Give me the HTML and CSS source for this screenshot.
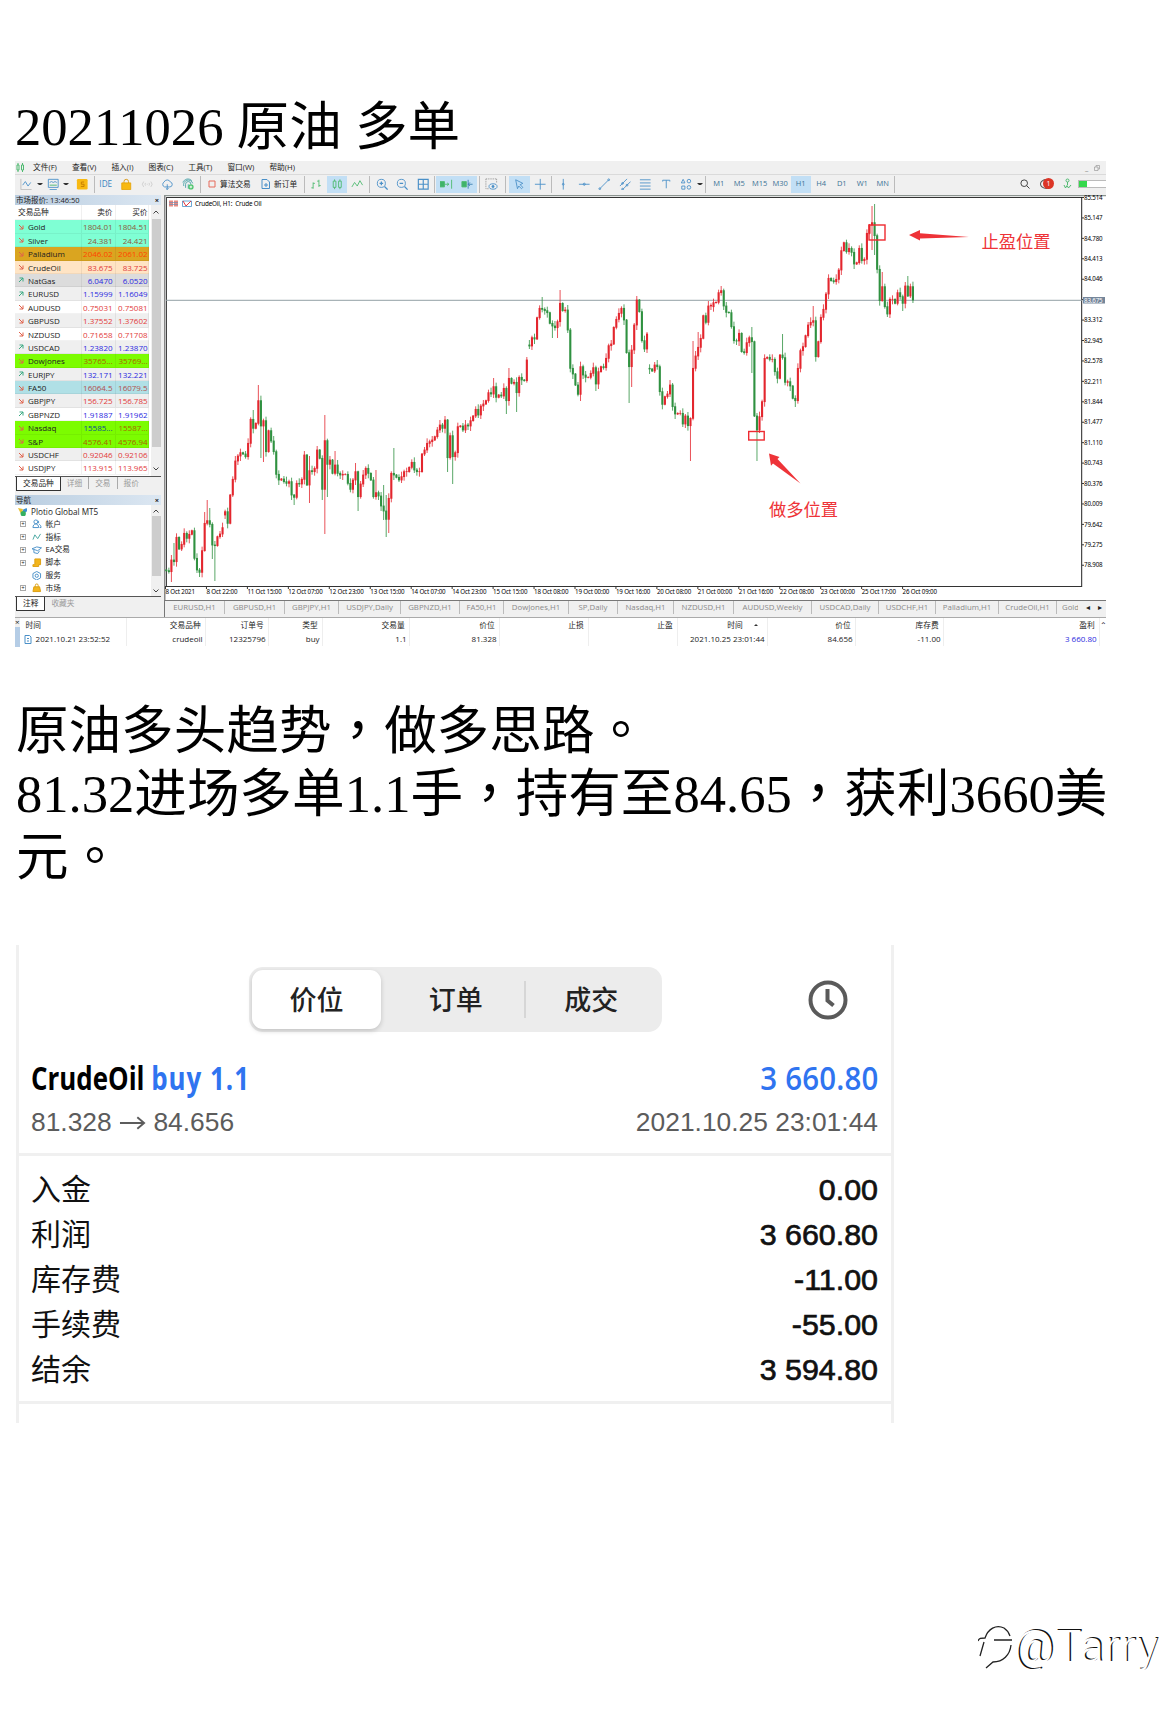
FILE: index.html
```
<!DOCTYPE html>
<html lang="zh-CN">
	<head>
		<meta charset="utf-8">
		<title>20211026 原油 多单</title>
		<link rel="stylesheet" href="styles.css">
	</head>
	<body>
		<svg class="defs">
			<symbol id="down" viewBox="0 0 6 6"><path d="M1 1l4 4M5 1.5V5H1.5" fill="none" stroke="#e0604a"/></symbol>
			<symbol id="up" viewBox="0 0 6 6"><path d="M1 5l4-4M1.5 1H5v3.5" fill="none" stroke="#3aa982"/></symbol>
		</svg>
		<h1>20211026 原油 多单</h1>

		<div class="terminal">
			<div class="menu">
				<svg width="9" height="9" viewBox="0 0 9 9" class="green"><path d="M1 2h2v5H1zM5.500 2h2v5h-2zM2 0v2M2 7v2M6.500 0v2M6.500 7v2"/></svg>
				<span>文件(F)</span><span>查看(V)</span><span>插入(I)</span><span>图表(C)</span><span>工具(T)</span><span>窗口(W)</span><span>帮助(H)</span>
				<div class="winbtn"><i>_</i><svg width="6" height="6" viewBox="0 0 6 6"><path d="M.5 2h3.500v3.500H.5zM2 2V.5h3.500V4H4" fill="none" stroke="#999" stroke-width=".7"/></svg></div>
			</div>
			<div class="toolbar">
				<div class="tool"><svg viewBox="0 0 14 14"><path d="M1 1v12h12" stroke="#bbb"/><path d="M3 8l3-4 3 5 3-4"/></svg></div>
				<div class="caret"></div>
				<div class="tool"><svg viewBox="0 0 14 14"><path d="M1.500 1.500h11v9h-11zM3 13h8M3 5l2-1 2 1 2-1 2 1" /><path d="M3 8h8" stroke="#3fb36b"/></svg></div>
				<div class="caret"></div>
				<div class="tool pad"><svg viewBox="0 0 14 14"><rect x="1" y="1" width="12" height="12" rx="1.500" fill="#f8b912" stroke="none"/><path d="M9 4.500H6v2.500h3v2.500H5.500" stroke="#c47a00"/></svg></div>
				<div class="sep w3"></div>
				<div class="tool ide">IDE</div>
				<div class="tool"><svg viewBox="0 0 14 14"><path d="M4.500 6V4a2.500 2.500 0 015 0v2" stroke="#d89510"/><path d="M2 5.500h10V13H2z" fill="#f8b912" stroke="#e5a50c"/></svg></div>
				<div class="tool"><svg viewBox="0 0 14 14"><path d="M3 4Q0 7 3 10M5 5.500Q4 7 5 8.500M9 5.500q1 1.500 0 3M11 4q3 3 0 6M6.500 7h1" stroke="#ccc"/></svg></div>
				<div class="tool"><svg viewBox="0 0 14 14"><path d="M4 10a3 3 0 01-.5-5.500 3.800 3.800 0 017 0A2.800 2.800 0 0110 10zM7 7v6M5.500 11.500L7 13l1.500-1.500" /></svg></div>
				<div class="tool"><svg viewBox="0 0 14 14"><path d="M2 9a5 5 0 0110-3M4 11V7a3 3 0 016 0M7 7v5M1 5a6 6 0 0110-2" stroke="#4aa3a8"/><circle cx="10" cy="10" r="3" fill="#4cc46c" stroke="none"/><path d="M8.500 10h3M10 8.500v3" stroke="#fff"/></svg></div>
				<div class="sep w4"></div>
				<div class="btn algo"><svg width="8" height="8" viewBox="0 0 8 8"><path d="M1 1h6v6H1z" fill="none" stroke="#e66a5a"/></svg>算法交易</div>
				<div class="btn order"><svg width="10" height="10" viewBox="0 0 10 10"><path d="M1 .5h5l2.500 2.500v6.500H1zM3 6h4M5 4v4" fill="none" stroke="#4a90c8"/></svg>新订单</div>
				<div class="sep w3"></div>
				<div class="tool green"><svg viewBox="0 0 14 14"><path d="M3.500 5v7M1.500 11h2M3.500 6h2M10 2v8M8 3.500h2M10 8.500h2"/></svg></div>
				<div class="tool green on"><svg viewBox="0 0 14 14"><path d="M2.500 3.500h3v7h-3zM8.500 3.500h3v7h-3zM4 1.500v2M4 10.500v2M10 1.500v2M10 10.500v2"/></svg></div>
				<div class="tool green"><svg viewBox="0 0 14 14"><path d="M1 10l3-5 3 4 3-6 3 5"/></svg></div>
				<div class="sep w4"></div>
				<div class="tool"><svg viewBox="0 0 14 14"><circle cx="6" cy="6" r="4.500"/><path d="M9.500 9.500L13 13M4 6h4M6 4v4" stroke-width="1.400"/></svg></div>
				<div class="tool"><svg viewBox="0 0 14 14"><circle cx="6" cy="6" r="4.500"/><path d="M9.500 9.500L13 13M4 6h4" stroke-width="1.400"/></svg></div>
				<div class="tool"><svg viewBox="0 0 14 14"><path d="M1.500 1.500h11v11h-11zM7 1.500v11M1.500 7h11" stroke-width="1.300"/></svg></div>
				<div class="sep w3"></div>
				<div class="tool green on"><svg viewBox="0 0 14 14"><path d="M0 4h5v6H0z" fill="#3fb36b"/><path d="M5 7h5M8 5.500L10 7 8 8.500M13 2v10"/></svg></div>
				<div class="tool green on"><svg viewBox="0 0 14 14"><path d="M1 4h5v6H1z" fill="#3fb36b"/><path d="M8 2v10M8 7h5M10 5L8 7l2 2" stroke="#3d7fb0"/></svg></div>
				<div class="sep w4"></div>
				<div class="tool"><svg viewBox="0 0 14 14"><path d="M1 1h12M1 1v11h4M13 1v4" stroke="#999" stroke-dasharray="1.500 1"/><ellipse cx="9" cy="9.500" rx="4.500" ry="3"/><circle cx="9" cy="9.500" r="1.200" fill="#4a90c8"/></svg></div>
				<div class="sep w7"></div>
				<div class="tool on"><svg viewBox="0 0 14 14"><path d="M3 2l8 4-3 1.500 3 3-1.500 1.500-3-3L5 12z"/></svg></div>
				<div class="tool"><svg viewBox="0 0 14 14"><path d="M7 1v12M1 7h12"/></svg></div>
				<div class="sep w3"></div>
				<div class="tool"><svg viewBox="0 0 14 14"><path d="M7 1v12"/><circle cx="7" cy="7" r="1"/></svg></div>
				<div class="tool"><svg viewBox="0 0 14 14"><path d="M1 7h12"/><circle cx="7" cy="7" r="1.200"/></svg></div>
				<div class="tool"><svg viewBox="0 0 14 14"><path d="M2 12L12 2"/><circle cx="2" cy="12" r="1"/><circle cx="12" cy="2" r="1"/></svg></div>
				<div class="tool"><svg viewBox="0 0 14 14"><path d="M1 9l8-8M4 13l9-9"/><circle cx="4" cy="6" r="1"/><circle cx="9" cy="8" r="1"/><circle cx="4" cy="12.500" r="1"/></svg></div>
				<div class="tool"><svg viewBox="0 0 14 14"><path d="M1 2h12M1 5.500h12M1 9h12M1 12.500h12"/></svg></div>
				<div class="tool"><svg viewBox="0 0 14 14"><path d="M3 4V2.500h8V4M7 2.500v9"/></svg></div>
				<div class="tool"><svg viewBox="0 0 14 14"><path d="M1.500 5.500l2-4 2 4zM2 9h3.500v3.500H2z"/><circle cx="10" cy="3.500" r="2"/><circle cx="10" cy="10.500" r="2"/></svg></div>
				<div class="caret"></div>
				<div class="sep w6"></div>
				<div class="tool tf">M1</div><div class="tool tf">M5</div><div class="tool tf">M15</div><div class="tool tf">M30</div><div class="tool tf on">H1</div><div class="tool tf">H4</div><div class="tool tf">D1</div><div class="tool tf">W1</div><div class="tool tf">MN</div>
				<div class="sep w3"></div>
				<div class="status">
					<svg width="10" height="10" viewBox="0 0 10 10"><circle cx="4.200" cy="4.200" r="3.300" fill="none" stroke="#444"/><path d="M6.500 6.500L9.500 9.500" stroke="#444"/></svg>
					<div class="chat"><span>1</span></div>
					<svg width="9" height="12" viewBox="0 0 9 12" class="green"><circle cx="4.500" cy="2.500" r="1.500"/><path d="M4.500 4v3M1 7l1.500 3L4 7.500 5.500 10 8 7"/></svg>
					<div class="battery"></div>
				</div>
			</div>

			<div class="work">
				<div class="side">
					<div class="caption">市场报价: 13:46:50<b>×</b></div>
					<div class="quotes">
						<div class="list">
							<div class="q head"><span>交易品种</span><span>卖价</span><span>买价</span></div>
							<div class="q aqua dn"><span><svg><use href="#down"/></svg>Gold</span><span>1804.01</span><span>1804.51</span></div>
							<div class="q aqua dn"><span><svg><use href="#down"/></svg>Silver</span><span>24.381</span><span>24.421</span></div>
							<div class="q gold dn"><span><svg><use href="#down"/></svg>Palladium</span><span>2046.02</span><span>2061.02</span></div>
							<div class="q bisque dn"><span><svg><use href="#down"/></svg>CrudeOil</span><span>83.675</span><span>83.725</span></div>
							<div class="q gray upp"><span><svg><use href="#up"/></svg>NatGas</span><span>6.0470</span><span>6.0520</span></div>
							<div class="q alt upp"><span><svg><use href="#up"/></svg>EURUSD</span><span>1.15999</span><span>1.16049</span></div>
							<div class="q dn"><span><svg><use href="#down"/></svg>AUDUSD</span><span>0.75031</span><span>0.75081</span></div>
							<div class="q alt dn"><span><svg><use href="#down"/></svg>GBPUSD</span><span>1.37552</span><span>1.37602</span></div>
							<div class="q dn"><span><svg><use href="#down"/></svg>NZDUSD</span><span>0.71658</span><span>0.71708</span></div>
							<div class="q alt upp"><span><svg><use href="#up"/></svg>USDCAD</span><span>1.23820</span><span>1.23870</span></div>
							<div class="q lime"><span><svg><use href="#down"/></svg>DowJones</span><span>35765...</span><span>35769...</span></div>
							<div class="q alt upp"><span><svg><use href="#up"/></svg>EURJPY</span><span>132.171</span><span>132.221</span></div>
							<div class="q powder dn"><span><svg><use href="#down"/></svg>FA50</span><span>16064.5</span><span>16079.5</span></div>
							<div class="q alt dn"><span><svg><use href="#down"/></svg>GBPJPY</span><span>156.725</span><span>156.785</span></div>
							<div class="q upp"><span><svg><use href="#up"/></svg>GBPNZD</span><span>1.91887</span><span>1.91962</span></div>
							<div class="q lime"><span><svg><use href="#down"/></svg>Nasdaq</span><span class="navy">15585...</span><span>15587...</span></div>
							<div class="q lime"><span><svg><use href="#down"/></svg>S&amp;P</span><span>4576.41</span><span>4576.94</span></div>
							<div class="q alt dn"><span><svg><use href="#down"/></svg>USDCHF</span><span>0.92046</span><span>0.92106</span></div>
							<div class="q dn"><span><svg><use href="#down"/></svg>USDJPY</span><span>113.915</span><span>113.965</span></div>
						</div>
						<div class="scroll"><svg viewBox="0 0 6 4"><path d="M.5 3.500L3 1l2.500 2.500"/></svg><div class="thumb"></div><svg viewBox="0 0 6 4"><path d="M.5.5L3 3 5.500.5"/></svg></div>
					</div>
					<div class="sidetabs"><b>交易品种</b><span>详细</span><span>交易</span><span>报价</span></div>
					<div class="caption nav">导航<b>×</b></div>
					<div class="quotes tree">
						<div class="list">
							<div class="node root"><svg viewBox="0 0 10 10"><path d="M0 1l5 1v4L3 7z" fill="#e8c030"/><path d="M5 3l4-2 1 3-4 3z" fill="#3a90d0"/><circle cx="5.500" cy="7" r="2.800" fill="#35b060"/></svg>Plotio Global MT5</div>
							<div class="node"><i>+</i><svg viewBox="0 0 10 10"><circle cx="4" cy="3" r="2"/><path d="M1 9c0-5 6-5 6 0zM6 1.500a2 2 0 010 3.500M8 9h1.500c0-2-1-3-2-3.500"/></svg>帐户</div>
							<div class="node"><i>+</i><svg viewBox="0 0 10 10"><path d="M1 8l2-5 3 4 3-5" stroke="#45a5a0"/></svg>指标</div>
							<div class="node"><i>+</i><svg viewBox="0 0 10 10"><path d="M0 4l5-2 5 1-4 3zM2 5v3l4 1 2-3"/></svg>EA交易</div>
							<div class="node"><i>+</i><svg viewBox="0 0 10 10"><path d="M3 1h6v6H7v2H1V7h2z" fill="#f2b51d" stroke="#dc9e10"/></svg>脚本</div>
							<div class="node"><i class="no"></i><svg viewBox="0 0 10 10"><path d="M5 .5l4 2.200v4.500L5 9.500 1 7.200V2.700z"/><circle cx="5" cy="5" r="1.700"/></svg>服务</div>
							<div class="node"><i>+</i><svg viewBox="0 0 10 10"><path d="M3.500 4V2.500a1.500 1.500 0 013 0V4" stroke="#dc9e10"/><path d="M2 4h6l1 5H1z" fill="#f2b51d" stroke="#dc9e10"/></svg>市场</div>
						</div>
						<div class="scroll"><svg viewBox="0 0 6 4"><path d="M.5 3.500L3 1l2.500 2.500"/></svg><div class="thumb"></div><svg viewBox="0 0 6 4"><path d="M.5.5L3 3 5.500.5"/></svg></div>
					</div>
					<div class="sidetabs low"><b>注释</b><span>收藏夹</span></div>
				</div>

				<div class="main">
					<svg id="chart" width="942" height="405" viewBox="164 195 942 405"></svg>
					<div class="tabs">
						<span>EURUSD,H1</span><span>GBPUSD,H1</span><span>GBPJPY,H1</span><span>USDJPY,Daily</span><span>GBPNZD,H1</span><span>FA50,H1</span><span>DowJones,H1</span><span>SP,Daily</span><span>Nasdaq,H1</span><span>NZDUSD,H1</span><span>AUDUSD,Weekly</span><span>USDCAD,Daily</span><span>USDCHF,H1</span><span>Palladium,H1</span><span>CrudeOil,H1</span><span class="cut">Gold</span><em>◂</em><em>▸</em>
					</div>
				</div>
			</div>

			<div class="history">
				<div class="grip">×</div>
				<div class="deals">
					<div class="row hd"><span>时间</span><span>交易品种</span><span>订单号</span><span>类型</span><span>交易量</span><span>价位</span><span>止损</span><span>止盈</span><span class="sorted">时间 <i></i></span><span>价位</span><span>库存费</span><span>盈利</span></div>
					<div class="row"><span><svg width="8" height="9" viewBox="0 0 8 9"><path d="M1 .5h4.500L7 2v6.500H1zM3 3.500h2M3 6h2" fill="none" stroke="#4a90c8"/></svg>2021.10.21 23:52:52</span><span>crudeoil</span><span>12325796</span><span>buy</span><span>1.1</span><span>81.328</span><span></span><span></span><span>2021.10.25 23:01:44</span><span>84.656</span><span>-11.00</span><span class="profit">3 660.80</span></div>
				</div>
				<div class="more">⌃</div>
			</div>
		</div>

		<p lang="zh-TW">原油多头趋势，做多思路。<br>81.32进场多单1.1手，持有至84.65，获利3660美元。</p>

		<div class="phone">
			<div class="top">
				<div class="segment"><span class="active">价位</span><span>订单</span><span class="line">成交</span></div>
				<svg class="clock" width="40" height="40" viewBox="0 0 40 40"><circle cx="20" cy="20" r="17.500"/><path d="M19.500 9v11.500l6 5"/></svg>
			</div>
			<div class="deal">
				<div class="name"><span>CrudeOil <em>buy 1.1</em></span><span class="r"><em>3 660.80</em></span></div>
				<div class="info"><span>81.328 <svg width="27" height="16" viewBox="0 0 28 16"><path d="M1 8h25M19 2l7 6-7 6"/></svg> 84.656</span><span>2021.10.25 23:01:44</span></div>
			</div>
			<div class="sums">
				<div><span>入金</span><b>0.00</b></div>
				<div><span>利润</span><b>3 660.80</b></div>
				<div><span>库存费</span><b>-11.00</b></div>
				<div><span>手续费</span><b>-55.00</b></div>
				<div><span>结余</span><b>3 594.80</b></div>
			</div>
		</div>

		<div class="mark">
			<svg width="35" height="44" viewBox="0 0 35 44"><path d="M2 31l4-14M0 16c1-3 3-3 7-3C10 4 18-1 26 3c3 2 5 5 6 8M16 15h18M33 20c-1 10-8 17-18 17l-7 6"/></svg>
			<span>@Tarry</span>
		</div>

		<script type="text/javascript">
			const chart = document.getElementById("chart");
			const step = 2.557;
			const left = 166.300;

			// close levels in thirds of a pixel, counted from "base"
			const series = [
				{ base: 380, close: [572,575,540,545,472,507,493,460,475,463,452,535,570,577,512,430,422,433,495,497,470,462,443,
					395,430,345,298,243,228,218,222,230,190,118,145,130,62,138,122,215,152,183,215,283,300,297,305,310,305,345,352,
					310,312,298,225,315,272,275,265,210,235,328,182,253,240,280,255,280,285,283,283,310,328,300,275,350,312,285,265,
					280,300,350,338,348,378,393,418,355,280,285,292,300,290,275,275,262,247,270,275,275,222,210,190,185,180,170,150,
					135,145,120] },
				{ base: 270, close: [563,497,560,548,470,468,480,465,468,452,438,418,435,408,402,392,368,372,350,382,375,378,355,
					392,325,340,337,368,322,330,332,270,228,203,207,143,115,118,122,128,160,168,173,155,100,122,120,180,295,312,345,
					373,290,315,322,322,310,293,342,305,290,293,265,227,222,172,148,130,115,150,248,290,240,165,90,125,212,237,192,
					297,303,285,290,365,403,380,372,345,410,432,430,430,462,438,467,445,295,258,232,205,137,157,108,106,98,97,68,62,
					108,127,128,170,212,213,190] },
				{ base: 190, close: [485,488,458,443,455,678,720,680,635,505,502,508,508,545,565,495,503,577,575,588,625,632,535,
					482,470,437,405,397,392,500,455,382,358,312,265,272,275,268,240,182,158,185,175,187,222,218,175,212,208,130,105,
					98,137,238,332,290,350,372,328,328,340,308,320,340,288,318,290,330] }
			];
			// opens that do not continue from the previous close
			const gaps = { 23: 515, 142: 345, 189: 368.300, 214: 306.700 };
			// long wicks: index -> [high, low]
			const wicks = {
				2: [0, 582], 3: [543, 0], 13: [0, 577], 15: [512, 0], 16: [500, 0], 17: [508, 0], 18: [0, 559], 19: [0, 581],
				34: [410, 0], 36: [385, 0], 37: [0, 458], 38: [0, 462], 50: [0, 505], 56: [456, 503], 61: [0, 500], 62: [415, 534],
				63: [0, 497], 66: [451, 0], 74: [463, 0], 75: [0, 511], 82: [470, 0], 85: [485, 520], 86: [495, 537], 87: [0, 533],
				89: [448, 0], 110: [0, 472], 112: [0, 484], 128: [378, 0], 133: [0, 414], 134: [368, 0], 137: [0, 412],
				147: [297, 0], 151: [0, 338], 153: [0, 338], 154: [290, 0], 162: [0, 401], 168: [0, 391], 181: [0, 403], 182: [0, 387], 205: [0, 461],
				206: [341, 0], 208: [332, 0], 217: [286, 0], 229: [327, 373], 231: [0, 461], 241: [334, 0], 246: [0, 407],
				253: [306, 0], 276: [206, 250], 277: [204, 255], 280: [272, 0], 288: [0, 311], 290: [276, 0]
			};

			let out = "";
			function line(x1, y1, x2, y2, color, w) {
				out += '<line x1="' + x1 + '" y1="' + y1 + '" x2="' + x2 + '" y2="' + y2 + '" stroke="' + color + '" stroke-width="' + (w || 1) + '"/>';
			}
			function text(x, y, str, cls) {
				out += '<text x="' + x + '" y="' + y + '" class="' + cls + '">' + str + '</text>';
			}

			out += '<rect x="164" y="195" width="942" height="405" fill="#fff"/>';
			line(164.500, 195, 164.500, 600, "#888", 2);
			line(164, 195.500, 1106, 195.500, "#8c9490", 1.500);
			line(166, 197.500, 1082, 197.500, "#333");
			line(166.500, 197, 166.500, 587, "#444");
			line(1081.700, 197, 1081.700, 587, "#222");
			line(166, 586.500, 1082, 586.500, "#333");
			line(166, 300.300, 1082, 300.300, "#93a0a6");

			let i = 0;
			let prev = 570;
			series.forEach(part => {
				part.close.forEach(value => {
					const close = part.base + value / 3;
					const open = gaps[i] || prev;
					const color = close <= open ? "#e3262e" : "#2f9140";
					const x = (left + i * step).toFixed(2);
					const wick = wicks[i] || [0, 0];
					const high = wick[0] || Math.min(open, close) - 1 - (i * 7 % 5);
					const low = wick[1] || Math.max(open, close) + 1 + (i * 11 % 5);
					line(x, high, x, low, color, .8);
					line(x, Math.min(open, close) - .4, x, Math.max(open, close) + .4, color, 2.100);
					prev = close;
					i++;
				});
			});

			for (let n = 0; n < 19; n++) {
				const y = 197.500 + n * 20.430;
				line(1082, y, 1084, y, "#333");
				if (n !== 5) {
					text(1084, y + 2.200, (85.514 - n * 0.367).toFixed(3), "axis");
				}
			}
			out += '<rect x="1083" y="297" width="22" height="6.500" fill="#75869a"/>';
			text(1084, 302.500, "83.675", "axis now");

			["8 Oct 2021", "8 Oct 22:00", "11 Oct 15:00", "12 Oct 07:00", "12 Oct 23:00", "13 Oct 15:00", "14 Oct 07:00", "14 Oct 23:00",
				"15 Oct 15:00", "18 Oct 08:00", "19 Oct 00:00", "19 Oct 16:00", "20 Oct 08:00", "21 Oct 00:00", "21 Oct 16:00",
				"22 Oct 08:00", "23 Oct 00:00", "25 Oct 17:00", "26 Oct 09:00"].forEach((label, n) => {
				const x = 165.500 + n * 40.950;
				line(x, 586, x, 589, "#333");
				text(x, 594.200, label, "axis");
			});

			out += '<path d="M169 200.500h4v6h-4zM174 200.500h4v6h-4z" fill="#e98a80"/><path d="M169 202.500h9M169 204.500h9" stroke="#6f8fb8" stroke-width=".7"/>';
			out += '<path d="M182.500 201h9v5.500h-9z" fill="none" stroke="#4a90c8" stroke-width=".8"/><path d="M183 201l3 5 3-3 2-2" fill="none" stroke="#e3262e" stroke-width=".9"/>';
			text(195, 206, "CrudeOil, H1:&nbsp; Crude Oil", "axis title");

			// entry and exit marks
			out += '<rect x="869" y="225" width="16" height="15" class="box"/><rect x="748.700" y="431.500" width="15.500" height="8.500" class="box"/>';
			out += '<path d="M909 235l11-5v3.200l49 3.800-49 1.500v2z" fill="#ee3338"/><path d="M769 453.500l10.500 3.500-2 2 23 24.500-27.500-20-2 2.200z" fill="#ee3338"/>';
			text(981.500, 248, "止盈位置", "note");
			text(769, 516, "做多位置", "note");
			chart.innerHTML = out;
		</script>
	</body>
</html>
```
FILE: styles.css
```
* {
	box-sizing: border-box;
}
html {
	background-color: #fff;
	color: #000;
}
body {
	margin: 0;
	padding: 96px 0 0 15px;
	width: 1170px;
	height: 1709px;
	overflow: hidden;
	font-family: "Liberation Serif", "Noto Sans CJK SC", serif;
}
svg {
	display: block;
	flex: none;
}
.defs {
	display: none;
}
h1, p {
	margin: 0;
	padding-left: 1px;
	font-size: 52.6px;
	font-weight: normal;
	line-height: 63px;
	white-space: nowrap;
}
h1 {
	height: 65px;
	padding-left: 0;
}
p {
	width: 1102px;
	margin-top: 53px;
	white-space: normal;
	font-family: "Liberation Serif", "Noto Sans CJK TC", serif;
}

/* trading terminal */
.terminal {
	width: 1091px;
	height: 486px;
	overflow: hidden;
	font: 8px/13px "Open Sans", "Noto Sans CJK SC", sans-serif;
	color: #222;
	background: #f0f0f0;
}
.menu {
	display: flex;
	align-items: center;
	height: 14px;
	padding-left: 1px;
	border-bottom: 1px solid #dadada;
}
.menu span {
	margin-right: 15px;
	font-size: 7.700px;
	white-space: nowrap;
}
.menu svg {
	margin-right: 8px;
}
.winbtn {
	display: flex;
	align-items: center;
	gap: 5px;
	margin-left: auto;
	color: #888;
}
.winbtn svg {
	margin-right: 6px;
}
.toolbar {
	display: flex;
	align-items: center;
	height: 20px;
	padding: 0 0 2px 1px;
}
.tool {
	width: 20.500px;
	height: 17px;
	flex: none;
	display: flex;
	align-items: center;
	justify-content: center;
	color: #3d7396;
}
.tool svg {
	width: 12.500px;
	height: 12.500px;
}
.tool svg, .green, .node svg {
	fill: none;
	stroke: #4a90c8;
}
.green, .green svg {
	stroke: #4fba70;
}
.on {
	background: #c2dff5;
}
.pad {
	margin-left: 3px;
}
.ide {
	color: #3a85c0;
	font-size: 8.200px;
	line-height: 10px;
	padding-bottom: 1px;
}
.tf {
	font-size: 7.500px;
	padding-bottom: 1px;
}
.caret {
	width: 6px;
	flex: none;
	border: 2px solid transparent;
	border-top: 2.500px solid #333;
	border-bottom: 0;
	background-clip: padding-box;
}
.sep {
	height: 17px;
	flex: none;
	background: linear-gradient(#bbb, #bbb) center / 1px 100% no-repeat;
}
.w3 {
	width: 3px;
}
.w4 {
	width: 4px;
}
.w6 {
	width: 6px;
}
.w7 {
	width: 7.500px;
}
.btn {
	display: flex;
	align-items: center;
	flex: none;
	font-size: 7.700px;
	white-space: nowrap;
}
.algo {
	width: 52px;
	padding-left: 6px;
	gap: 4px;
}
.order {
	width: 49px;
	padding-left: 7px;
	gap: 3px;
}
.status {
	display: flex;
	align-items: center;
	margin-left: auto;
}
.chat {
	width: 13px;
	height: 10px;
	margin: 0 10px;
	border: 1px solid #555;
	border-radius: 50%;
	position: relative;
}
.chat span {
	position: absolute;
	top: -2px;
	right: -2px;
	width: 11px;
	height: 11px;
	border-radius: 50%;
	background: #dc3526;
	color: #fff;
	line-height: 11px;
	text-align: center;
	font-size: 7px;
}
.battery {
	width: 28px;
	height: 8px;
	margin-left: 6px;
	border: 1px solid #bbb;
	border-right: 0;
	background: linear-gradient(90deg, #35d84c 8px, #fff 8px);
}
.work {
	display: flex;
	height: 422px;
}
.side {
	width: 149px;
	padding-right: 3px;
	flex: none;
}
.caption {
	display: flex;
	justify-content: space-between;
	height: 10px;
	padding: 0 2px 0 1px;
	background: linear-gradient(90deg, #b9cde0, #dce7f2);
	font-size: 7.500px;
	line-height: 10px;
}
.quotes {
	display: flex;
	height: 272px;
	background: #fff;
	border-bottom: 1px solid #555;
}
.list {
	width: 134px;
	overflow: hidden;
}
.q {
	display: grid;
	grid-template-columns: 67px 34px 33px;
	height: 13.400px;
	line-height: 13px;
	border-bottom: 1px solid rgba(0, 0, 0, .05);
}
.q span {
	padding-right: 2.500px;
	border-right: 1px solid rgba(0, 0, 0, .06);
	text-align: right;
	white-space: nowrap;
	letter-spacing: -.02px;
}
.q span:first-child {
	display: flex;
	align-items: center;
	gap: 4px;
	padding-left: 3px;
	color: #222;
}
.q span:last-child {
	padding-right: .5px;
}
.q svg {
	width: 6px;
	height: 6px;
}
.head {
	height: 15.400px;
	line-height: 15px;
	font-size: 7.700px;
}
.dn {
	color: #e23a3a;
}
.upp {
	color: #2a2ae0;
}
.aqua {
	background: #7fffd4;
	color: #8c5a3c;
}
.gold {
	background: #daa520;
	color: #ff4500;
}
.bisque {
	background: #ffe4c4;
}
.gray {
	background: #dcdcdc;
}
.alt {
	background: #efefef;
}
.lime {
	background: #7cfc00;
	color: #a86400;
}
.powder {
	background: #b0e0e6;
	color: #b0504e;
}
.navy {
	color: #10508c;
}
.scroll {
	flex: 1;
	display: flex;
	flex-direction: column;
	align-items: center;
	margin-left: 2px;
	background: #f0f0f0;
}
.scroll svg {
	width: 6px;
	height: 4px;
	margin: 5px 0;
	fill: none;
	stroke: #444;
}
.thumb {
	width: 9px;
	height: 228px;
	margin-bottom: auto;
	background: #cdcdcd;
}
.sidetabs {
	display: flex;
	height: 14px;
	color: #999;
	font-size: 7.700px;
	margin-bottom: 4px;
}
.sidetabs b {
	height: 14px;
	padding: 0 6px;
	margin-left: 1px;
	border: 1px solid #333;
	border-top: 0;
	background: #fff;
	color: #222;
	font-weight: normal;
}
.sidetabs span {
	padding: 0 6px;
	border-right: 1px solid #aaa;
	line-height: 13px;
	height: 12px;
}
.sidetabs span:last-child {
	border: 0;
}
.tree {
	height: 92px;
}
.tree .thumb {
	height: 60px;
}
.tree .scroll svg {
	margin: 4px 0 3px;
}
.node {
	display: flex;
	align-items: center;
	height: 12.800px;
	padding-left: 5px;
	font-size: 7.700px;
	background: #fff;
}
.root {
	padding-left: 2.500px;
	font-size: 8.200px;
}
.root svg {
	stroke: none;
}
.node svg {
	width: 9.500px;
	height: 9.500px;
	margin-right: 4px;
}
.node i {
	width: 6px;
	height: 6px;
	margin-right: 6px;
	border: 1px solid #aaa;
	font: 6px/4px "Open Sans", sans-serif;
	text-align: center;
}
.node .no {
	border-color: transparent;
}
.low {
	margin: 0;
}
.main {
	width: 942px;
	background: #fff;
}
.axis {
	font: 6.200px "Noto Sans", sans-serif;
	letter-spacing: -.16px;
	fill: #000;
}
.now {
	fill: #fff;
}
.title {
	font-size: 6.300px;
}
.box {
	fill: none;
	stroke: #ee2a30;
	stroke-width: 1.400;
}
.note {
	font: 17.300px "Noto Sans CJK SC", sans-serif;
	fill: #ee3338;
}
.tabs {
	display: grid;
	grid-template-columns: 60px 60px 54px 62px 59px 44px 65px 49px 56px 60px 78px 67px 57px 63px 58px 25px 12px 12px;
	grid-template-rows: 12px;
	height: 17px;
	border-top: 1px solid #777;
	border-left: 1px solid #777;
	background: #f0f0f0;
	color: #8a8a8a;
	font-size: 7.800px;
	text-align: center;
}
.tabs span {
	height: 13px;
	border-right: 1px solid #bbb;
	line-height: 12px;
	white-space: nowrap;
	overflow: hidden;
}
.tabs .cut {
	width: 16px;
	margin-left: 5px;
	border: 0;
	text-align: left;
}
.tabs em {
	color: #222;
	font-style: normal;
	font-size: 8px;
	line-height: 12px;
}
.history {
	display: flex;
	height: 30px;
	border-top: 1px solid #aaa;
	background: #fff;
}
.grip {
	width: 6px;
	margin-right: 1px;
	background: linear-gradient(#f0f0f0 9px, #b5cde6 9px);
	font-size: 8px;
	line-height: 7px;
}
.deals {
	width: 1079px;
}
.row {
	display: grid;
	grid-template-columns: 106px 79px 63px 54px 87px 90px 89px 89px 90px 88px 88px 156px;
	height: 14px;
	line-height: 14px;
	text-align: right;
}
.row span {
	padding-right: 2px;
	border-right: 1px solid #eee;
	white-space: nowrap;
}
.row span:first-child {
	display: flex;
	align-items: center;
	gap: 4px;
	padding-left: 3px;
}
.hd {
	font-size: 7.700px;
}
.hd span {
	padding-right: 4px;
}
.hd span:first-child {
	padding-left: 5px;
}
.sorted i {
	display: inline-block;
	margin: 0 5px 2px 9px;
	border: 2px solid transparent;
	border-bottom-color: #333;
	border-top: 0;
}
.row .profit {
	color: #2a2ae0;
}
.more {
	font-size: 8px;
}

/* phone summary */
.phone {
	width: 878px;
	height: 478px;
	margin: 56px 0 0 1px;
	border: solid #f0f0f0;
	border-width: 0 3px;
	font-family: "Liberation Sans", "Noto Sans CJK SC", sans-serif;
}
.top {
	display: flex;
	align-items: center;
	justify-content: flex-end;
	height: 109px;
	padding-right: 43px;
}
.segment {
	display: flex;
	width: 413px;
	height: 65px;
	margin-right: 146px;
	padding: 3px;
	border-radius: 14px;
	background: #ececec;
	font-size: 27px;
	font-weight: 500;
	line-height: 62px;
	text-align: center;
	color: #222;
}
.segment span {
	flex: 1;
	height: 59px;
}
.segment .active {
	flex: 0 0 129px;
	margin-right: 7px;
	border-radius: 11px;
	background: #fff;
	box-shadow: 0 2px 5px rgba(0, 0, 0, .18);
}
.segment .line {
	background: linear-gradient(#d6d6d6, #d6d6d6) left center / 2px 37px no-repeat;
}
.clock {
	fill: none;
	stroke: #5a5a5a;
	stroke-width: 4;
}
.deal {
	height: 102px;
	padding: 0 13px 0 12px;
	border-bottom: 3px solid #f0f0f0;
}
.name, .info {
	display: flex;
	justify-content: space-between;
}
.name {
	height: 48px;
	font: 700 32px/48px "Open Sans", sans-serif;
}
.name span {
	transform: scaleX(.81);
	transform-origin: left;
}
.name .r {
	transform: scaleX(.92);
	transform-origin: right;
}
.name em {
	color: #2f74f0;
	font-style: normal;
	letter-spacing: 1.200px;
}
.name .r em {
	font-weight: 600;
	letter-spacing: .2px;
}
.info {
	height: 42px;
	color: #5c5c5c;
	font-size: 26.400px;
	line-height: 41px;
}
.info svg {
	display: inline-block;
	fill: none;
	stroke: #5c5c5c;
	stroke-width: 2;
}
.sums {
	height: 248px;
	padding: 11px 13px 0 12px;
	border-bottom: 3px solid #f0f0f0;
}
.sums div {
	display: flex;
	justify-content: space-between;
	height: 45px;
	font-size: 30px;
	line-height: 45px;
	color: #111;
}
.sums b {
	font-weight: normal;
	font-size: 30.400px;
	-webkit-text-stroke: .7px #111;
}
.mark {
	display: flex;
	align-items: center;
	justify-content: flex-end;
	gap: 1px;
	margin-top: 199px;
	padding-right: 11px;
	font: 300 44px/50px Roboto, sans-serif;
	letter-spacing: 1.100px;
	color: #fff;
	text-shadow: 1.400px -1px 0 #111;
}
.mark svg {
	fill: none;
	stroke: #222;
	stroke-width: 1.300;
}
```
